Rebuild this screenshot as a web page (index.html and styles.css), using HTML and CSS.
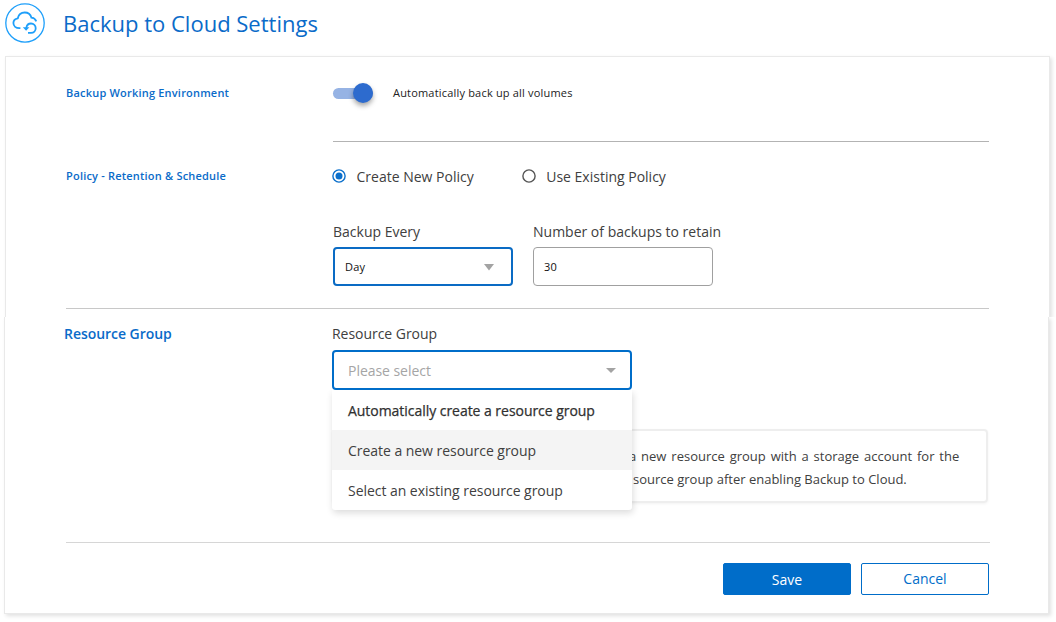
FILE: index.html
```html
<!DOCTYPE html>
<html lang="en">
<head>
<meta charset="utf-8">
<title>Backup to Cloud Settings</title>
<link rel="stylesheet" href="styles.css">
</head>
<body>
<header class="header">
  <svg class="logo" width="40" height="40" viewBox="0 0 40 40" fill="none" stroke="#1e9ffa">
    <circle cx="20" cy="20" r="19.2" stroke-width="1.3"/>
    <path d="M15.400 25.200h-1c-3.400 0-6-2.200-6-5.100 0-2.600 1.800-4.400 4.400-4.800.7-3.400 3.400-5.800 6.900-5.800 3.400 0 5.900 2.200 6.700 5.100 2.200.1 3.900 1.300 4.900 3.700" stroke-width="1.800"/>
    <path d="M21.300 25c.4-2.900 2.200-4.500 4.700-4.500 2.700 0 4.700 2 4.700 4.700s-2 4.700-4.700 4.700h-3" stroke-width="1.800"/>
    <path d="M17.800 24.200h6.600l-3.300 3.500z" fill="#1e9ffa" stroke="none"/>
  </svg>
  <h1 class="title">Backup to Cloud Settings</h1>
</header>
<main class="panel">
  <section class="part part-top">
    <div class="row row-environment">
      <h2 class="section-label">Backup Working Environment</h2>
      <div class="environment">
        <span class="toggle"><span class="knob"></span></span>
        <span class="toggle-text">Automatically back up all volumes</span>
      </div>
    </div>
    <div class="row row-policy">
      <h2 class="section-label">Policy - Retention &amp; Schedule</h2>
      <div class="policy">
        <div class="radios">
          <label class="radio radio-on"><svg width="14" height="14" viewBox="0 0 14 14"><circle cx="7" cy="7" r="6.1" fill="none" stroke="#0a6fcb" stroke-width="1.4"/><circle cx="7" cy="7" r="3.5" fill="#0a6fcb"/></svg><span>Create New Policy</span></label>
          <label class="radio"><svg width="14" height="14" viewBox="0 0 14 14"><circle cx="7" cy="7" r="6.1" fill="none" stroke="#555" stroke-width="1.4"/></svg><span>Use Existing Policy</span></label>
        </div>
        <div class="fields">
          <div class="field">
            <span class="field-label">Backup Every</span>
            <div class="control select"><span>Day</span><svg class="caret" width="10" height="7" viewBox="0 0 10 7"><path d="M0 0h10L5 6.500z" fill="#a3a3a3"/></svg></div>
          </div>
          <div class="field">
            <span class="field-label">Number of backups to retain</span>
            <div class="control"><span>30</span></div>
          </div>
        </div>
      </div>
    </div>
  </section>
  <section class="part part-bottom">
    <div class="group">
      <h2 class="section-label group-title">Resource Group</h2>
      <div class="group-body">
        <span class="group-label">Resource Group</span>
        <div class="group-select"><span>Please select</span><svg width="10" height="5" viewBox="0 0 10 5"><path d="M0 0h10L5 5z" fill="#a3a3a3"/></svg></div>
        <div class="note"><p class="note-line">a new resource group with a storage account for the</p><p class="note-line note-end">source group after enabling Backup to Cloud.</p></div>
        <ul class="menu">
          <li class="item item-strong"><span>Automatically create a resource group</span></li>
          <li class="item item-hover"><span>Create a new resource group</span></li>
          <li class="item"><span>Select an existing resource group</span></li>
        </ul>
      </div>
    </div>
    <footer class="actions">
      <button class="btn btn-primary">Save</button>
      <button class="btn">Cancel</button>
    </footer>
  </section>
</main>
</body>
</html>
```
FILE: styles.css
```css
* { box-sizing: border-box; }
body { margin: 0; width: 1056px; height: 622px; overflow: hidden; background: #fff; color: #404040; font-family: "Open Sans", "Noto Sans", sans-serif; font-size: 14px; white-space: nowrap; }
h1, h2, p, ul { margin: 0; padding: 0; }
svg { display: block; flex: none; }
.header { display: flex; height: 56px; padding: 3px 0 0 5px; }
.title { margin: 4px 0 0 18px; color: #0a6bc9; font-size: 22px; font-weight: 400; line-height: 32px; }
.panel { width: 1046px; margin-left: 4px; }
.part { width: 1045px; background: #fff; border: 1px solid #e9e9e9; box-shadow: 2px 2px 4px rgba(0, 0, 0, .12); }
.part-top { height: 261px; margin-left: 1px; padding: 0 60px; border-bottom: 0; clip-path: inset(-4px -8px 0 -4px); }
.part-bottom { height: 297px; border-top: 0; padding: 0 59px 0 61px; clip-path: inset(0 -8px -8px -4px); }
.row { display: flex; }
.section-label { width: 267px; flex: none; color: #0a6bc9; font-size: 11px; font-weight: 600; line-height: 16px; letter-spacing: .2px; }
.row-environment { height: 85px; padding-top: 28px; }
.environment { display: flex; flex: 1; height: 57px; border-bottom: 1px solid #b3b3b3; }
.toggle { display: flex; justify-content: flex-end; width: 40px; height: 11px; margin-top: 3px; align-items: center; border-radius: 6px; background: #96b3e4; }
.knob { width: 20px; height: 20px; margin-bottom: 1px; border-radius: 50%; background: #2d6bce; box-shadow: 0 3px 5px rgba(0, 0, 0, .35); }
.toggle-text { margin-left: 20px; color: #222; font-size: 11px; line-height: 16px; letter-spacing: .19px; }
.row-policy { height: 167px; padding-top: 26px; border-bottom: 1px solid #c8c8c8; }
.radios { display: flex; gap: 49px; height: 54px; margin-top: -2px; }
.radio { display: flex; gap: 10px; height: 20px; align-items: center; margin-left: -1px; }
.radio span { padding-left: .5px; }
.fields { display: flex; gap: 20px; }
.field { display: flex; flex-direction: column; width: 180px; }
.field-label { height: 27px; line-height: 23px; }
.control { display: flex; align-items: center; justify-content: space-between; height: 39px; padding: 0 10px; border: 1px solid #a0a0a0; border-radius: 4px; color: #111; font-size: 11px; letter-spacing: .2px; }
.select { padding: 0 17px 0 10px; border: 2px solid #0a6bc4; }
.caret { margin-top: 1px; }
.group { display: flex; height: 226px; padding-top: 7px; border-bottom: 1px solid #d6d6d6; width: 924px; }
.group-title { width: 268px; margin-left: -2px; font-size: 14px; line-height: 20px; letter-spacing: -.04px; }
.group-body { position: relative; display: flex; flex-direction: column; width: 656px; letter-spacing: -.04px; }
.group-label { height: 26px; line-height: 20px; }
.group-select { display: flex; align-items: center; justify-content: space-between; width: 300px; height: 40px; padding: 0 14px; border: 2px solid #006dc9; border-radius: 4px; color: #a5a5a5; }
.note { display: flex; flex-direction: column; align-items: flex-end; height: 74px; margin-top: 39px; padding: 14px 27px 0 0; border: 2px solid #eee; border-radius: 4px; font-size: 13px; line-height: 23px; letter-spacing: 0; box-shadow: 0 1px 3px rgba(0, 0, 0, .05); }
.note-line { width: 330px; word-spacing: 1.5px; }
.note-end { width: 327px; padding-left: 1px; word-spacing: 0; }
.menu { position: absolute; left: 0; top: 66px; width: 300px; height: 120px; list-style: none; background: #fff; border-radius: 0 0 3px 3px; box-shadow: 1px 3px 7px rgba(0, 0, 0, .14); clip-path: inset(0 -10px -10px -10px); }
.item { height: 40px; padding-left: 16px; line-height: 42px; }
.item-strong { color: #303030; -webkit-text-stroke: .25px #303030; }
.item-hover { background: #f4f4f4; }
.actions { display: flex; justify-content: flex-end; gap: 10px; padding: 20px 0 0; }
.btn { width: 128px; height: 32px; padding: 0; border: 1px solid #006dc9; border-radius: 2px; background: #fff; color: #006dc9; font: 14px/30px "Open Sans", "Noto Sans", sans-serif; }
.btn-primary { background: #006dc9; color: #fff; line-height: 32px; }
```
